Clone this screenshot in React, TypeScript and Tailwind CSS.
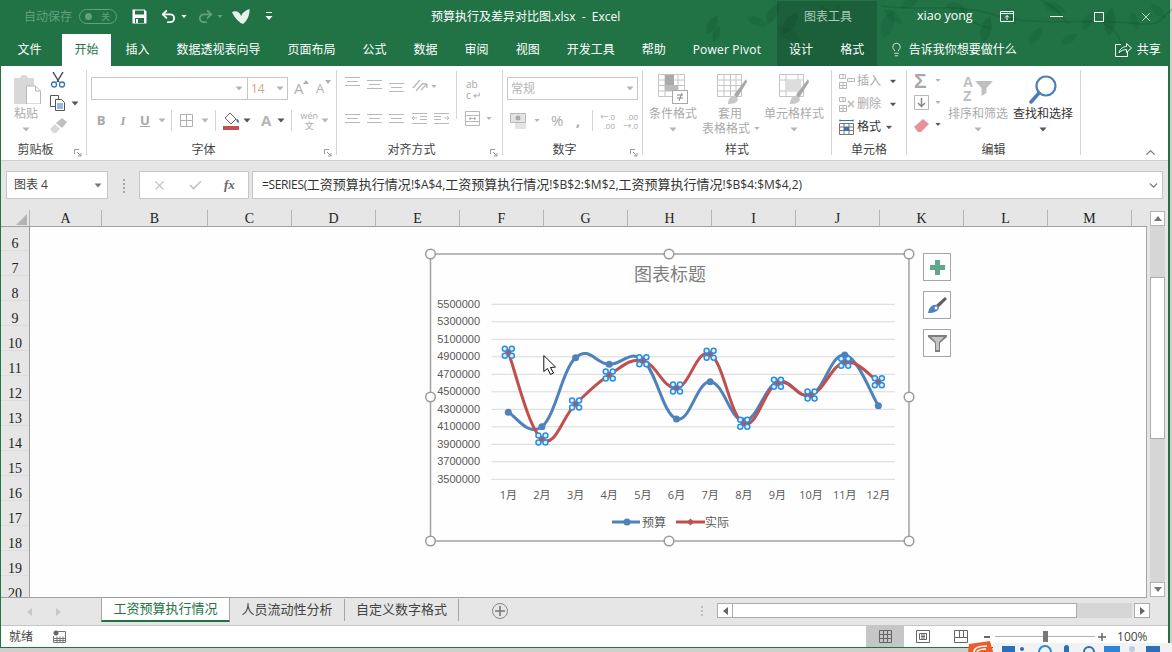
import React from "react";
import { Lightbulb, X, Check, ChevronDown, ChevronUp, Undo2, Redo2 } from "lucide-react";

const XS = Array.from({ length: 12 }, (_, i) => 508.3 + i * 33.64);
const BLUE = [412.3, 426.7, 357.7, 364.3, 360, 419, 381.7, 421, 382, 395, 355, 405.7];
const RED = [352.3, 439, 404, 375, 360.7, 388, 354.3, 423.3, 383.3, 395, 362.3, 381.7];
const YTICKS = ["5500000", "5300000", "5100000", "4900000", "4700000", "4500000", "4300000", "4100000", "3900000", "3700000", "3500000"];

function smooth(ys: number[]) {
  const p = ys.map((y, i) => [XS[i], y]);
  let d = `M${p[0][0]} ${p[0][1]}`;
  for (let i = 0; i < p.length - 1; i++) {
    const a = p[Math.max(0, i - 1)], b = p[i], c = p[i + 1], e = p[Math.min(p.length - 1, i + 2)];
    const t = 1 / 5;
    d += ` C${b[0] + (c[0] - a[0]) * t} ${b[1] + (c[1] - a[1]) * t} ${c[0] - (e[0] - b[0]) * t} ${c[1] - (e[1] - b[1]) * t} ${c[0]} ${c[1]}`;
  }
  return d;
}

function Caret({ c = "#b5b5b5", className = "" }: { c?: string; className?: string }) {
  return (
    <svg width="8" height="5" viewBox="0 0 8 5" className={`shrink-0 ${className}`}>
      <path d="M0.5 0.5h7L4 4.5z" fill={c} />
    </svg>
  );
}

function Sep() {
  return <span className="block w-px h-[21px] bg-[#d4d4d4] shrink-0" />;
}

function Launcher() {
  return (
    <svg width="8" height="8" viewBox="0 0 8 8" className="absolute right-[4px] -bottom-[2px]">
      <path d="M0.5 5V.5H5M3 3l4 4M7 4v3H4" fill="none" stroke="#9a9a9a" />
    </svg>
  );
}

function Label({ children, off }: { children: React.ReactNode; off?: boolean }) {
  return <div className={`h-[16px] leading-[16px] text-center text-[12px] text-[#444444] shrink-0 -mb-[3px] ${off ? "pr-[16px]" : ""}`}>{children}</div>;
}

function Leaf({ x, y, r, s = 1, o = 0.2 }: { x: number; y: number; r: number; s?: number; o?: number }) {
  return (
    <path
      d="M0 0C6 -7 16 -7 24 0C16 6 6 6 0 0Z"
      transform={`translate(${x} ${y}) rotate(${r}) scale(${s})`}
      fill="#0f4a2a"
      opacity={o}
    />
  );
}

function TitleLeaves() {
  return (
    <svg width="1172" height="66" viewBox="0 0 1172 66" className="absolute left-0 top-0 pointer-events-none">
      <path d="M880 6C930 12 950 2 990 14S1060 20 1110 22S1150 30 1172 8" fill="none" stroke="#0f4a2a" strokeOpacity=".28" strokeWidth="1.5" />
      <path d="M1040 0C1056 8 1060 16 1068 24M1100 22C1112 28 1118 34 1120 44M960 8C965 18 975 26 990 28" fill="none" stroke="#0f4a2a" strokeOpacity=".25" strokeWidth="1.5" />
      <Leaf x={884} y={10} r={40} s={0.9} />
      <Leaf x={882} y={38} r={-70} s={1.2} />
      <Leaf x={900} y={8} r={-30} s={0.9} />
      <Leaf x={945} y={4} r={25} s={1.1} />
      <Leaf x={982} y={42} r={-75} s={1.1} o={0.25} />
      <Leaf x={1005} y={8} r={60} s={0.8} />
      <Leaf x={1028} y={44} r={-50} s={0.9} />
      <Leaf x={1042} y={4} r={20} s={1} />
      <Leaf x={1082} y={30} r={-60} s={0.9} />
      <Leaf x={1108} y={36} r={-85} s={1.2} o={0.24} />
      <Leaf x={1130} y={12} r={70} s={0.8} />
      <Leaf x={1118} y={58} r={-70} s={0.8} />
      <Leaf x={1150} y={4} r={45} s={0.8} />
      <Leaf x={820} y={6} r={60} s={0.8} o={0.25} />
      <Leaf x={838} y={4} r={100} s={0.7} o={0.25} />
      <Leaf x={782} y={34} r={-55} s={1.1} o={0.3} />
      <Leaf x={776} y={28} r={30} s={1.1} o={0.25} />
      <Leaf x={850} y={42} r={40} s={0.8} o={0.25} />
      <Leaf x={706} y={34} r={-60} s={0.9} o={0.24} />
      <Leaf x={718} y={26} r={110} s={0.7} o={0.24} />
      <Leaf x={766} y={24} r={-60} s={1} o={0.22} />
      <Leaf x={746} y={18} r={20} s={0.9} o={0.2} />
      <Leaf x={1060} y={44} r={-30} s={0.8} o={0.18} />
    </svg>
  );
}

function TitleBar() {
  return (
    <div className="h-[33px] flex items-center text-white relative">
      <span className="ml-[23px] text-[12px] text-[#62a07e]">自动保存</span>
      <span className="ml-[7px] w-[38px] h-[15px] rounded-full border border-[#62a07e] flex items-center justify-between pl-[5px] pr-[6px] text-[9px] text-[#62a07e]">
        <span className="w-[7px] h-[7px] rounded-full bg-[#62a07e]" />
        <span>关</span>
      </span>
      <svg width="15" height="15" viewBox="0 0 15 15" className="ml-[15px]">
        <path d="M0.5 0.5h12l2 2v12h-14z" fill="#fff" />
        <rect x="3" y="1.5" width="9" height="4" fill="#217346" />
        <rect x="3" y="9" width="9" height="5" fill="#217346" />
        <rect x="4" y="10" width="2" height="4" fill="#fff" />
      </svg>
      <Undo2 size={17} strokeWidth={2.6} className="ml-[13px]" />
      <Caret c="#ffffff" className="ml-[3px] scale-75" />
      <Redo2 size={17} strokeWidth={2.6} className="ml-[9px] text-[#62a07e]" />
      <Caret c="#62a07e" className="ml-[2px] scale-75" />
      <svg width="18" height="15" viewBox="0 0 18 15" className="ml-[8px]">
        <path d="M0 3C4 1 8 3 9 7C11 3 14 1 17.500 0C18 6 15 12 11 15C8 14 3 10 0 3Z" fill="#e8f0ea" />
      </svg>
      <svg width="8" height="9" viewBox="0 0 8 9" className="ml-[15px]">
        <path d="M1 .5h6" stroke="#fff" />
        <path d="M0.5 4h7L4 8z" fill="#fff" />
      </svg>
      <span className="ml-[158px] text-[12px] leading-none whitespace-pre w-[373px]">预算执行及差异对比图.xlsx  -  Excel</span>
      <span className="text-[12px] text-[#a6cbb6] w-[113px]">图表工具</span>
      <span className="text-[12.5px] w-[83px]">xiao yong</span>
      <svg width="14" height="11" viewBox="0 0 14 11">
        <path d="M.5.5h13v10H.5zM.5 2.500h13M7 9V4.500M5 6.500l2-2 2 2" fill="none" stroke="#fff" />
      </svg>
      <span className="ml-[36px] w-[13px] h-px bg-white" />
      <span className="ml-[31px] w-[10px] h-[10px] border border-white" />
      <X size={14} strokeWidth={1.2} className="ml-[35px]" />
    </div>
  );
}

function Tab({ children, active, cls = "" }: { children: React.ReactNode; active?: boolean; cls?: string }) {
  return (
    <span className={`h-[32px] mt-[1px] flex items-center px-[12.5px] text-[12px] whitespace-nowrap ${active ? "bg-white text-[#217346]" : "text-white"} ${cls}`}>
      {children}
    </span>
  );
}

function TabBar() {
  return (
    <div className="h-[33px] flex relative pl-[4px] gap-[2px]">
      <Tab>文件</Tab>
      <Tab active cls="ml-[6px]">开始</Tab>
      <Tab>插入</Tab>
      <Tab>数据透视表向导</Tab>
      <Tab>页面布局</Tab>
      <Tab>公式</Tab>
      <Tab>数据</Tab>
      <Tab>审阅</Tab>
      <Tab>视图</Tab>
      <Tab>开发工具</Tab>
      <Tab>帮助</Tab>
      <Tab><span className="tracking-[0.2px]">Power Pivot</span></Tab>
      <Tab cls="ml-[1px]">设计</Tab>
      <Tab>格式</Tab>
      <span className="ml-[10px] flex items-center text-white text-[12px] whitespace-nowrap">
        <Lightbulb size={15} strokeWidth={1.2} />
        <span className="ml-[5px]">告诉我你想要做什么</span>
      </span>
      <span className="ml-[96px] flex items-center text-white text-[12px]">
        <svg width="17" height="15" viewBox="0 0 17 15">
          <path d="M6 2.500H.5v12h12V10M4 11C5 6 9 4.500 11.500 4.500V1.500L16.500 6l-5 4.500V7.500C9 7.500 6 8.500 4 11Z" fill="none" stroke="#fff" />
        </svg>
        <span className="ml-[5px]">共享</span>
      </span>
    </div>
  );
}

function BigBtn({ icon, lines, dark, iconCls = "", firstCls = "" }: { icon: React.ReactNode; lines: string[]; dark?: boolean; iconCls?: string; firstCls?: string }) {
  return (
    <div className="flex flex-col items-center pt-[4px]">
      <div className={`h-[30px] flex items-center justify-center ${iconCls}`}>{icon}</div>
      <div className={`text-[12px] leading-[15px] mt-[2px] whitespace-nowrap text-center ${dark ? "text-[#333333]" : "text-[#aaaaaa]"}`}>
        {lines.map((l, i) => (
          <div key={l} className={i === 0 ? firstCls : ""}>{l}</div>
        ))}
      </div>
    </div>
  );
}

const G = "#b8b8b8";

function Lines({ cls = "" }: { cls?: string }) {
  return (
    <svg width="15" height="10" viewBox="0 0 15 10" className={cls}>
      <path d="M0 .5h15M2 4.500h11M0 8.500h15" stroke={G} />
    </svg>
  );
}

function Indent({ cls = "" }: { cls?: string }) {
  return (
    <svg width="15" height="11" viewBox="0 0 15 11" className={cls}>
      <path d="M0 .5h15M8 3.500h7M8 6.500h7M0 10.500h15M5 5H0M2 3L0 5l2 2" fill="none" stroke={G} />
    </svg>
  );
}

function CellIcon({ x }: { x?: boolean }) {
  return (
    <svg width="16" height="16" viewBox="0 0 16 16">
      <path d="M.5 1.500h6v4h-6zM.5 9.500h7v6h-7zM.5 12.500h7M4 9.500v6M4 1.500v4" fill="none" stroke={G} />
      {x ? <path d="M9 5l6 6M15 5l-6 6" stroke={G} strokeWidth="1.500" /> : <path d="M8.500 5.500h7v3h-7z" fill="none" stroke={G} />}
    </svg>
  );
}

function Ribbon() {
  return (
    <div className="h-[94px] bg-white flex pt-[4px] pb-[5px] text-[#aaaaaa] relative">
      {/* clipboard */}
      <div className="w-[86px] flex flex-col border-r border-[#d4d4d4] relative">
        <div className="flex-1 flex">
          <div className="ml-[10px] w-[30px] flex flex-col items-center pt-[4px]">
            <svg width="30" height="30" viewBox="0 0 30 30">
              <path d="M3 4h6l2-3h4l2 3h6v26H3z" fill="#d8d8d8" />
              <path d="M15.500 12h9l5 5v13h-14z" fill="#fff" stroke="#b8b8b8" />
              <path d="M24.500 12v5h5" fill="none" stroke="#b8b8b8" />
            </svg>
            <span className="text-[12px] leading-[15px] mt-[2px]">粘贴</span>
            <Caret className="mt-[6px]" />
          </div>
          <div className="ml-[9px] flex flex-col pt-[2px] gap-[7px]">
            <svg width="16" height="16" viewBox="0 0 16 16">
              <path d="M3 0l6 10M13 0L7 10" stroke="#444" strokeWidth="1.400" />
              <circle cx="4" cy="12.500" r="2.500" fill="none" stroke="#2f75b5" strokeWidth="1.300" />
              <circle cx="12" cy="12.500" r="2.500" fill="none" stroke="#2f75b5" strokeWidth="1.300" />
            </svg>
            <div className="flex items-center">
              <svg width="16" height="16" viewBox="0 0 16 16">
                <path d="M.5.5h8v11h-8z" fill="#fff" stroke="#555" />
                <path d="M5.500 4.500h6l3 3v8h-9z" fill="#fff" stroke="#555" />
                <path d="M7 9h6M7 11h6M7 13h6" stroke="#2f75b5" />
              </svg>
              <Caret c="#555" className="ml-[5px]" />
            </div>
            <svg width="17" height="16" viewBox="0 0 17 16">
              <path d="M0 11l5-5 5 5-4 4H3z" fill="#d8d8d8" />
              <path d="M6 5l6-5 5 4-5 6z" fill="#c0c0c0" />
            </svg>
          </div>
        </div>
        <Label off>剪贴板</Label>
        <Launcher />
      </div>

      {/* font */}
      <div className="w-[250px] flex flex-col border-r border-[#d4d4d4] relative">
        <div className="flex-1">
          <div className="flex items-center pl-[4px] pt-[7px]">
            <div className="w-[157px] h-[23px] border border-[#c6c6c6] flex items-center justify-end pr-[4px]"><Caret /></div>
            <div className="w-[41px] h-[23px] border border-[#c6c6c6] flex items-center justify-between px-[3px] -ml-px text-[12px] text-[#c9a988]">14<Caret /></div>
            <span className="ml-[6px] text-[15px] leading-none text-[#b0b0b0] relative w-[15px]">A<span className="absolute right-0 -top-[1px]"><svg width="6" height="4" viewBox="0 0 6 4"><path d="M0 4h6L3 0z" fill="#b0b0b0" /></svg></span></span>
            <span className="ml-[7px] text-[13px] leading-none text-[#b0b0b0] relative w-[15px]">A<span className="absolute right-0 -top-[2px]"><svg width="6" height="4" viewBox="0 0 6 4"><path d="M0 0h6L3 4z" fill="#b0b0b0" /></svg></span></span>
          </div>
          <div className="flex items-center h-[21px] mt-[10px] pl-[3px] text-[13px] text-[#a8a8a8]">
            <span className="w-[22px] text-center font-bold">B</span>
            <span className="w-[22px] text-center italic font-['Liberation_Serif',serif] font-bold">I</span>
            <span className="w-[22px] text-center underline font-bold">U</span>
            <Caret className="ml-[2px]" />
            <span className="w-[5px]" />
            <Sep />
            <svg width="14" height="14" viewBox="0 0 14 14" className="ml-[8px]">
              <path d="M.5.5h12v12H.5zM6.500 .5v12M.5 6.500h12" fill="none" stroke="#b0b0b0" />
            </svg>
            <Caret className="ml-[7px]" />
            <span className="w-[6px]" />
            <Sep />
            <svg width="17" height="18" viewBox="0 0 17 18" className="ml-[7px]">
              <path d="M7 1l6 6-5 5-6-6z" fill="#fff" stroke="#666" />
              <path d="M13 7c2 0 3 1 3 3 0 1-1 1-2 0z" fill="#2f75b5" />
              <rect x="0" y="14" width="16" height="4" fill="#c44f4f" />
            </svg>
            <Caret c="#555" className="ml-[3px]" />
            <span className="ml-[10px] text-[15px] font-bold text-[#b5b5b5] leading-none">A</span>
            <Caret c="#555" className="ml-[6px]" />
            <span className="w-[6px]" />
            <Sep />
            <span className="ml-[8px] w-[18px] flex flex-col items-center leading-[10px] text-[9px] text-[#aaaaaa]"><span>wén</span><span className="text-[9px]">文</span></span>
            <Caret className="ml-[3px]" />
          </div>
        </div>
        <Label off>字体</Label>
        <Launcher />
      </div>

      {/* alignment */}
      <div className="w-[166px] flex flex-col border-r border-[#d4d4d4] relative">
        <div className="flex-1 flex">
          <div className="w-[119px] flex flex-col pl-[8px]">
            <div className="flex items-center h-[22px] mt-[5px]">
              <Lines cls="-mt-[8px]" />
              <Lines cls="ml-[7px] -mt-[2px]" />
              <Lines cls="ml-[7px] mt-[4px]" />
              <svg width="16" height="16" viewBox="0 0 16 16" className="ml-[8px]">
                <path d="M1 10L8 2M4 13l7-8M9 12l6-6M15 6v4M15 6h-4" fill="none" stroke={G} strokeWidth="1.300" />
              </svg>
              <Caret className="ml-[2px] scale-75" />
            </div>
            <div className="flex items-center h-[21px] mt-[11px]">
              <Lines />
              <Lines cls="ml-[7px]" />
              <Lines cls="ml-[7px]" />
              <Indent cls="ml-[8px]" />
              <Indent cls="ml-[7px] -scale-x-100" />
            </div>
          </div>
          <div className="flex flex-col">
            <span className="block w-px h-[48px] mt-[1px] bg-[#d4d4d4]" />
          </div>
          <div className="ml-[8px] flex flex-col">
            <div className="text-[10px] leading-[11px] mt-[9px] h-[25px] pl-[1px] text-[#a8a8a8]">ab<br />c ↵</div>
            <div className="flex items-center mt-[7px]">
              <svg width="15" height="15" viewBox="0 0 15 15">
                <path d="M.5.500h14v14H.5zM.5 4.500h14M.5 10.500h14M4 7.500h7M4 7.500l2-1.500M4 7.500l2 1.500M11 7.500l-2-1.500M11 7.500l-2 1.500" fill="none" stroke={G} />
              </svg>
              <Caret className="ml-[5px] scale-75" />
            </div>
          </div>
        </div>
        <Label off>对齐方式</Label>
        <Launcher />
      </div>

      {/* number */}
      <div className="w-[140px] flex flex-col border-r border-[#d4d4d4] relative">
        <div className="flex-1 pl-[4px]">
          <div className="mt-[7px] w-[131px] h-[23px] border border-[#c6c6c6] flex items-center justify-between px-[3px] text-[12px] text-[#b4b4b4]">常规<Caret /></div>
          <div className="flex items-center h-[21px] mt-[10px] pl-[3px]">
            <svg width="17" height="17" viewBox="0 0 17 17">
              <path d="M.5 1.500h15v9H.5z" fill="#e4e4e4" stroke={G} />
              <circle cx="8" cy="6" r="2.500" fill="#aaa" />
              <path d="M5 12h11M5 14h11M5 16h11" stroke="#c8c8c8" />
            </svg>
            <Caret className="ml-[6px] scale-75" />
            <span className="ml-[10px] text-[15px] text-[#aaaaaa] w-[16px] leading-none">%</span>
            <span className="ml-[9px] text-[14px] font-bold text-[#aaaaaa] w-[6px] leading-none">,</span>
            <span className="w-[10px]" />
            <Sep />
            <span className="ml-[7px] w-[15px] text-right text-[8px] leading-[9px] text-[#a8a8a8]">←.0<br />.00</span>
            <span className="ml-[8px] w-[15px] text-right text-[8px] leading-[9px] text-[#a8a8a8]">.00<br />→.0</span>
          </div>
        </div>
        <Label off>数字</Label>
        <Launcher />
      </div>

      {/* styles */}
      <div className="w-[189px] flex flex-col border-r border-[#d4d4d4]">
        <div className="flex-1 flex pl-[6px]">
          <div className="w-[48px]">
            <BigBtn
              icon={
                <svg width="30" height="30" viewBox="0 0 30 30">
                  <path d="M.5.500h26v22H.5zM.5 6h26M.5 11.500h26M.5 17h26M7 .5v22M20 .5v22" fill="none" stroke="#c4c4c4" />
                  <rect x="7" y="1" width="9" height="10" fill="#aaaaaa" />
                  <rect x="7" y="11" width="13" height="6" fill="#bbbbbb" />
                  <rect x="14.500" y="16.500" width="15" height="13" fill="#fff" stroke="#aaa" />
                  <path d="M19 21h6M19 24h6M24 19l-3 8" stroke="#888" fill="none" />
                </svg>
              }
              lines={["条件格式"]}
            />
            <div className="flex justify-center mt-[6px]"><Caret /></div>
          </div>
          <div className="w-[58px]">
            <BigBtn
              iconCls="ml-[12px]"
              firstCls="pl-[8px]"
              icon={
                <svg width="30" height="30" viewBox="0 0 30 30">
                  <path d="M.5.500h24v22H.5zM.5 6h24M.5 11.500h24M.5 17h24M7 .5v22M13.500 .5v22M19 .5v22" fill="none" stroke="#c4c4c4" />
                  <path d="M29 5L17 21l3 3L30 8z" fill="#a8a8a8" />
                  <path d="M11 30c0-6 4-9 7-8l3 3c0 4-5 5-10 5z" fill="#c8c8c8" />
                </svg>
              }
              lines={["套用", "表格格式"]}
            />
          </div>
          <span className="-ml-[2px] mt-[56px]"><Caret className="scale-75" /></span>
          <div className="ml-[3px] w-[60px]">
            <BigBtn
              icon={
                <svg width="30" height="30" viewBox="0 0 30 30">
                  <path d="M.5.500h24v22H.5zM.5 6h24M.5 17h24M7 .5v22M19 .5v22" fill="none" stroke="#c4c4c4" />
                  <rect x="7" y="6" width="15" height="11" fill="#dddddd" />
                  <path d="M29 5L17 21l3 3L30 8z" fill="#a8a8a8" />
                  <path d="M11 30c0-6 4-9 7-8l3 3c0 4-5 5-10 5z" fill="#c8c8c8" />
                </svg>
              }
              lines={["单元格样式"]}
            />
            <div className="flex justify-center mt-[6px]"><Caret /></div>
          </div>
        </div>
        <Label>样式</Label>
      </div>

      {/* cells */}
      <div className="w-[75px] flex flex-col border-r border-[#d4d4d4]">
        <div className="flex-1 flex flex-col pl-[7px] pt-[2px] text-[12px] gap-[5px]">
          <div className="h-[18px] flex items-center">
            <CellIcon />
            <span className="ml-[2px] w-[32px]">插入</span>
            <Caret c="#555" className="scale-90" />
          </div>
          <div className="h-[18px] flex items-center">
            <CellIcon x />
            <span className="ml-[2px] w-[32px]">删除</span>
            <Caret c="#555" className="scale-90" />
          </div>
          <div className="h-[18px] flex items-center text-[#333333]">
            <svg width="16" height="16" viewBox="0 0 16 16">
              <path d="M.5 1.500h14M1 .5v2M14 .5v2" stroke="#2f75b5" fill="none" />
              <path d="M.5 4.500h14v11H.5zM.5 8h14M.5 11.500h14M5 4.500v11M10 4.500v11" fill="none" stroke="#777" />
              <rect x="5" y="8" width="5" height="4" fill="#2f75b5" />
            </svg>
            <span className="ml-[2px] w-[28px]">格式</span>
            <Caret c="#555" className="scale-90" />
          </div>
        </div>
        <Label>单元格</Label>
      </div>

      {/* editing */}
      <div className="w-[174px] flex flex-col border-r border-[#d4d4d4]">
        <div className="flex-1 flex pl-[7px]">
          <div className="flex flex-col pt-[3px] gap-[7px] w-[34px]">
            <div className="h-[15px] flex items-center">
              <span className="text-[21px] leading-none text-[#a8a8a8] w-[16px] font-bold font-['Liberation_Sans',sans-serif]">Σ</span>
              <Caret className="ml-[4px] scale-75" />
            </div>
            <div className="h-[15px] flex items-center">
              <svg width="15" height="15" viewBox="0 0 15 15">
                <path d="M.5.500h14v14H.5z" fill="none" stroke={G} />
                <path d="M7.500 3v8M4 8l3.500 3.500L11 8" fill="none" stroke="#888" strokeWidth="1.500" />
              </svg>
              <Caret className="ml-[5px] scale-75" />
            </div>
            <div className="h-[15px] flex items-center">
              <svg width="15" height="14" viewBox="0 0 15 14">
                <path d="M0 9l9-8 6 5-8 8H4z" fill="#e8909c" />
              </svg>
              <Caret c="#555" className="ml-[5px] scale-75" />
            </div>
          </div>
          <div className="w-[60px]">
            <BigBtn
              icon={
                <span className="flex items-center w-[30px]">
                  <span className="flex flex-col w-[12px] text-[14px] leading-[14px] font-bold text-[#bdbdbd] font-['Liberation_Sans',sans-serif]">
                    <span>A</span>
                    <span>Z</span>
                  </span>
                  <svg width="18" height="16" viewBox="0 0 18 16">
                    <path d="M0 0h18l-6.500 7v5l-5 3V7z" fill="#c0c0c0" />
                  </svg>
                </span>
              }
              lines={["排序和筛选"]}
            />
            <div className="flex justify-center mt-[6px]"><Caret /></div>
          </div>
          <div className="w-[60px] ml-[5px]">
            <BigBtn
              dark
              icon={
                <svg width="28" height="29" viewBox="0 0 28 29">
                  <circle cx="17" cy="11" r="9.500" fill="none" stroke="#4a7ebb" strokeWidth="2.200" />
                  <path d="M10 18L2 27" stroke="#4a7ebb" strokeWidth="3.500" strokeLinecap="round" />
                </svg>
              }
              lines={["查找和选择"]}
            />
            <div className="flex justify-center mt-[6px]"><Caret c="#555" /></div>
          </div>
        </div>
        <Label>编辑</Label>
      </div>
      <ChevronUp size={15} strokeWidth={2} className="absolute right-[10px] bottom-[0px] text-[#777777]" />
    </div>
  );
}

function FormulaBar() {
  const L = "text-[12px]";
  return (
    <div className="h-[28px] mt-[10px] flex pl-[5px] pr-[5px]">
      <div className="w-[102px] bg-white border border-[#c6c6c6] flex items-center justify-between pl-[7px] pr-[5px] text-[12px] text-[#444444]">
        图表 4
        <Caret c="#777777" />
      </div>
      <div className="w-[31px] flex flex-col items-center justify-center gap-[2px] pt-[1px]">
        <span className="w-[2px] h-[2px] bg-[#a6a6a6]" />
        <span className="w-[2px] h-[2px] bg-[#a6a6a6]" />
        <span className="w-[2px] h-[2px] bg-[#a6a6a6]" />
        <span className="w-[2px] h-[2px] bg-[#a6a6a6]" />
      </div>
      <div className="w-[110px] bg-white border border-[#c6c6c6] flex items-center pl-[12px]">
        <X size={15} strokeWidth={1.800} className="text-[#c4c4c4]" />
        <Check size={15} strokeWidth={2.800} className="ml-[21px] text-[#c4c4c4]" />
        <span className="ml-[21px] text-[13px] font-bold italic text-[#666666] font-['Liberation_Serif',serif]">fx</span>
      </div>
      <div className="ml-[3px] flex-1 bg-white border border-[#c6c6c6] flex items-center justify-between pl-[9px] pr-[2px] text-[13px] text-[#333333] whitespace-nowrap">
        <span>
          <span className={`${L} tracking-[-0.35px]`}>=SERIES(</span>工资预算执行情况<span className={L}>!$A$4,</span>工资预算执行情况<span className={L}>!$B$2:$M$2,</span>工资预算执行情况<span className={L}>!$B$4:$M$4,2)</span>
        </span>
        <ChevronDown size={13} strokeWidth={2.500} className="text-[#777777]" />
      </div>
    </div>
  );
}

const COLS: [string, string][] = [
  ["A", "w-[72px]"],
  ["B", "w-[106px]"],
  ["C", "w-[84px]"],
  ["D", "w-[84px]"],
  ["E", "w-[84px]"],
  ["F", "w-[84px]"],
  ["G", "w-[84px]"],
  ["H", "w-[84px]"],
  ["I", "w-[84px]"],
  ["J", "w-[84px]"],
  ["K", "w-[84px]"],
  ["L", "w-[84px]"],
  ["M", "w-[84px]"],
];

function ColHeader() {
  return (
    <div className="h-[17px] flex border-b border-[#9f9f9f] font-['Liberation_Serif',serif] text-[14px] leading-[18px] text-[#222222]">
      <div className="w-[29px] border-r border-[#b4b4b4] flex items-end justify-end pr-[2px] pb-[1px]">
        <svg width="11" height="11" viewBox="0 0 11 11"><path d="M11 0v11H0z" fill="#b4b4b4" /></svg>
      </div>
      {COLS.map(([c, w]) => (
        <div key={c} className={`${w} border-r border-[#b4b4b4] text-center`}>{c}</div>
      ))}
    </div>
  );
}

function RowHeader() {
  const rows = [6, 7, 8, 9, 10, 11, 12, 13, 14, 15, 16, 17, 18, 19, 20];
  return (
    <div className="w-[29px] border-r border-[#9f9f9f] overflow-hidden shrink-0 font-['Liberation_Serif',serif] text-[14px] leading-[16px] text-[#222222]">
      {rows.map((r) => (
        <div key={r} className={`${r === 6 ? "h-[24px]" : "h-[25px]"} border-b border-[#dcdcdc] flex items-end justify-center`}>
          <span className="-mb-[2px]">{r}</span>
        </div>
      ))}
    </div>
  );
}

function SelMarker({ x, y }: { x: number; y: number }) {
  return (
    <g>
      <path d={`M${x} ${y - 3.500}L${x + 3.500} ${y}L${x} ${y + 3.500}L${x - 3.500} ${y}Z`} fill="#c0504d" />
      {[[-3.500, -3.500], [3.500, -3.500], [-3.500, 3.500], [3.500, 3.500]].map(([dx, dy], i) => (
        <circle key={i} cx={x + dx} cy={y + dy} r="2.500" fill="#e4f2fc" stroke="#2b8ee0" strokeWidth="1.500" />
      ))}
    </g>
  );
}

function Chart() {
  const handles = [
    [430.5, 254], [669, 254], [909, 254], [430.5, 397], [909, 397], [430.5, 541], [669, 541], [909, 541],
  ];
  return (
    <svg width="500" height="304" viewBox="420 246 500 304" className="absolute left-[390px] top-[19px]">
      <rect x="430.500" y="254" width="478.500" height="287" fill="#fefefe" stroke="#a2a2a2" strokeWidth="1.500" />
      <text x="670" y="281" textAnchor="middle" fontSize="18" fill="#7f7f7f">图表标题</text>
      {YTICKS.map((t, i) => (
        <g key={t}>
          <line x1="491.500" x2="895" y1={304.300 + i * 17.500} y2={304.300 + i * 17.500} stroke="#d9d9d9" strokeWidth="1" />
          <text x="480" y={307.500 + i * 17.500} textAnchor="end" fontSize="11" fill="#595959" fontFamily="'Liberation Sans',sans-serif">{t}</text>
        </g>
      ))}
      {XS.map((x, i) => (
        <text key={i} x={x} y={499} textAnchor="middle" fontSize="11" fill="#595959">{i + 1}月</text>
      ))}
      <path d={smooth(BLUE)} fill="none" stroke="#4f81bd" strokeWidth="3" strokeLinecap="round" />
      {XS.map((x, i) => (
        <circle key={i} cx={x} cy={BLUE[i]} r="3.500" fill="#4f81bd" />
      ))}
      <path d={smooth(RED)} fill="none" stroke="#c0504d" strokeWidth="3" strokeLinecap="round" />
      {XS.map((x, i) => (
        <SelMarker key={i} x={x} y={RED[i]} />
      ))}
      <line x1="612" x2="640" y1="522" y2="522" stroke="#4f81bd" strokeWidth="3" />
      <circle cx="627" cy="522" r="3.500" fill="#4f81bd" />
      <text x="642" y="526.500" fontSize="12" fill="#595959">预算</text>
      <line x1="676" x2="705" y1="522" y2="522" stroke="#c0504d" strokeWidth="3" />
      <path d="M690.500 518.500l3.500 3.500-3.500 3.500-3.500-3.500z" fill="#c0504d" />
      <text x="705" y="526.500" fontSize="12" fill="#595959">实际</text>
      {handles.map(([x, y], i) => (
        <circle key={i} cx={x} cy={y} r="4.800" fill="#fefefe" stroke="#9a9a9a" strokeWidth="1.500" />
      ))}
      <path d="M543.800 355.500V371.500L547.500 368.500L550.500 374.500L553.500 373L550.500 367.500L555.500 367Z" fill="#fff" stroke="#111" strokeWidth="1" />
    </svg>
  );
}

function ChartTools() {
  const box = "w-[28px] h-[28px] bg-[#fefefe] border border-[#a6a6a6] flex items-center justify-center";
  return (
    <div className="absolute left-[893px] top-[26px] flex flex-col gap-[10px]">
      <div className={box}>
        <svg width="15" height="15" viewBox="0 0 15 15"><path d="M5 0h5v5h5v5h-5v5H5v-5H0V5h5z" fill="#62a78c" /></svg>
      </div>
      <div className={box}>
        <svg width="19" height="17" viewBox="0 0 19 17">
          <path d="M17 0l2 2-8 8-3-2z" fill="#5f5f5f" />
          <path d="M0 16c1-6 5-9 8-8l3 2c0 4-5 6-11 6z" fill="#4f81bd" />
          <circle cx="8" cy="11" r="2" fill="#fff" stroke="#4f81bd" />
        </svg>
      </div>
      <div className={box}>
        <svg width="19" height="17" viewBox="0 0 19 17">
          <path d="M0 0h19v2l-7 6v9H7V8L0 2z" fill="#7f7f7f" />
          <path d="M3 2h13l-5 5v8H8V7z" fill="#c4c4c4" />
        </svg>
      </div>
    </div>
  );
}

function VScroll() {
  const btn = "h-[15px] bg-white border border-[#b4b4b4] flex items-center justify-center shrink-0";
  return (
    <div className="w-[15px] ml-[3px] mr-[3px] flex flex-col pt-[1px] h-[387px] shrink-0">
      <div className={btn}>
        <svg width="8" height="5" viewBox="0 0 8 5"><path d="M0 5h8L4 0z" fill="#777" /></svg>
      </div>
      <div className="h-[51px] bg-[#d6d6d6] shrink-0" />
      <div className="h-[162px] bg-white border border-[#ababab] shrink-0" />
      <div className="flex-1 bg-[#d6d6d6]" />
      <div className={btn}>
        <svg width="8" height="5" viewBox="0 0 8 5"><path d="M0 0h8L4 5z" fill="#777" /></svg>
      </div>
    </div>
  );
}

function Sheet() {
  return (
    <div className="flex">
      <div className="w-[1146px]">
        <ColHeader />
        <div className="h-[371px] flex border-b border-[#9f9f9f]">
          <RowHeader />
          <div className="flex-1 bg-[#fefefe] relative border-r border-[#a6a6a6]">
            <Chart />
            <ChartTools />
          </div>
        </div>
      </div>
      <VScroll />
    </div>
  );
}

function SheetTabs() {
  const hbtn = "w-[16px] h-[15px] bg-white border border-[#ababab] flex items-center justify-center shrink-0";
  return (
    <div className="h-[27px] flex text-[13px] text-[#444444] whitespace-nowrap">
      <div className="w-[100px] flex items-center pl-[26px]">
        <svg width="5" height="8" viewBox="0 0 5 8"><path d="M5 0v8L0 4z" fill="#c6c6c6" /></svg>
        <svg width="5" height="8" viewBox="0 0 5 8" className="ml-[24px]"><path d="M0 0v8l5-4z" fill="#c6c6c6" /></svg>
      </div>
      <div className="w-[129px] h-[24px] bg-white border-b-2 border-[#217346] border-l border-r border-l-[#a6a6a6] border-r-[#a6a6a6] flex items-center justify-center text-[#217346]">工资预算执行情况</div>
      <div className="w-[115px] h-[22px] flex items-center justify-center border-r border-[#a6a6a6] my-[1px]">人员流动性分析</div>
      <div className="w-[114px] h-[22px] flex items-center justify-center border-r border-[#a6a6a6] my-[1px]">自定义数字格式</div>
      <div className="ml-[33px] flex items-center pb-[2px]">
        <span className="w-[16px] h-[16px] rounded-full border border-[#888888] flex items-center justify-center">
          <svg width="10" height="10" viewBox="0 0 10 10"><path d="M5 0v10M0 5h10" stroke="#777" strokeWidth="1.600" /></svg>
        </span>
      </div>
      <div className="ml-[193px] flex flex-col justify-center gap-[2px] pb-[2px]">
        <span className="w-[2px] h-[2px] bg-[#c0c0c0]" />
        <span className="w-[2px] h-[2px] bg-[#c0c0c0]" />
        <span className="w-[2px] h-[2px] bg-[#c0c0c0]" />
      </div>
      <div className="ml-[14px] flex items-center h-[25px]">
        <div className={hbtn}><svg width="5" height="8" viewBox="0 0 5 8"><path d="M5 0v8L0 4z" fill="#666" /></svg></div>
        <div className="w-[345px] h-[15px] bg-white border border-[#ababab] -ml-px" />
        <div className="w-[55px] h-[15px] bg-[#d6d6d6]" />
        <div className={`${hbtn} ml-[2px]`}><svg width="5" height="8" viewBox="0 0 5 8"><path d="M0 0v8l5-4z" fill="#666" /></svg></div>
      </div>
    </div>
  );
}

function StatusBar() {
  return (
    <div className="h-[22px] bg-white border-t border-[#c6c6c6] flex items-center text-[12px] text-[#444444]">
      <span className="ml-[8px]">就绪</span>
      <svg width="13" height="13" viewBox="0 0 13 13" className="ml-[20px]">
        <circle cx="3" cy="3" r="2.500" fill="#666" />
        <path d="M5 1.500h7.500v11H.5V6M.5 8.500h12M.5 10.500h12M4 6.500v6M7 6.500v6M10 6.500v6" fill="none" stroke="#777" />
      </svg>
      <div className="ml-[800px] w-[38px] h-[21px] bg-[#c6c6c6] flex items-center justify-center">
        <svg width="13" height="13" viewBox="0 0 13 13"><path d="M.5.500h12v12H.5zM4.500 .5v12M8.500 .5v12M.5 4.500h12M.5 8.500h12" fill="none" stroke="#666" /></svg>
      </div>
      <svg width="14" height="13" viewBox="0 0 14 13" className="ml-[12px]">
        <path d="M.5.500h13v12H.5zM3.500 3.500h7v6h-7zM5 5h4M5 6.500h4M5 8h4" fill="none" stroke="#666" />
      </svg>
      <svg width="14" height="13" viewBox="0 0 14 13" className="ml-[24px]">
        <path d="M.5.500h13v12H.5zM.5 7.500h13M5.500 .5v7M9.500 .5v7" fill="none" stroke="#666" />
      </svg>
      <span className="ml-[16px] w-[6px] h-[2px] bg-[#666666]" />
      <span className="ml-[5px] w-[100px] h-px bg-[#b0b0b0] relative">
        <span className="absolute left-[48px] -top-[5px] w-[5px] h-[11px] bg-[#777777]" />
      </span>
      <svg width="8" height="8" viewBox="0 0 8 8" className="ml-[3px]"><path d="M4 0v8M0 4h8" stroke="#666" strokeWidth="1.500" /></svg>
      <span className="ml-[11px] text-[#444444]">100%</span>
    </div>
  );
}

function Tray() {
  return (
    <div className="absolute left-[968px] top-[641px] w-[204px] h-[11px] overflow-hidden flex">
      <svg width="25" height="11" viewBox="0 0 25 11" className="shrink-0">
        <path d="M1 3L22 0L25 11H0Z" fill="#ee5c2c" />
        <path d="M6 11C6 6 12 5 19 5M9 11C10 8 14 8 18 8" fill="none" stroke="#fff" strokeWidth="1.600" />
      </svg>
      <div className="flex-1 bg-[#f2f2f2] mt-[2px] overflow-hidden">
        <svg width="180" height="9" viewBox="0 0 180 9">
          <rect x="9" y="3" width="13" height="9" fill="#2a6fbb" />
          <circle cx="29" cy="6" r="2" fill="#2a6fbb" />
          <circle cx="52" cy="9" r="6" fill="none" stroke="#2a86d8" strokeWidth="2" />
          <rect x="71" y="2" width="5" height="9" rx="2.500" fill="#2a6fbb" />
          <circle cx="96" cy="9" r="5" fill="none" stroke="#2a6fbb" strokeWidth="2" />
          <rect x="111" y="3" width="16" height="9" fill="#2a86d8" />
          <circle cx="139" cy="6" r="3" fill="#b9cde0" />
          <rect x="153" y="3" width="14" height="9" fill="#2a6fbb" />
        </svg>
      </div>
    </div>
  );
}

export default function App() {
  return (
    <div className="relative w-[1172px] h-[652px] overflow-hidden bg-[#cfcfcf] font-['Open_Sans','Noto_Sans_CJK_SC',sans-serif]">
      <div className="w-[1170px] h-[648px] bg-[#e6e6e6] border-l border-r-2 border-b border-[#217346] flex flex-col">
        <div className="h-[66px] bg-[#217346] relative">
          <div className="absolute left-[776px] top-[1px] w-[100px] h-[65px] bg-[#1c5f3b]" />
          <TitleLeaves />
          <TitleBar />
          <TabBar />
        </div>
        <Ribbon />
        <div className="h-px bg-[#d0d0d0]" />
        <FormulaBar />
        <div className="h-[11px]" />
        <Sheet />
        <SheetTabs />
        <StatusBar />
      </div>
      <Tray />
    </div>
  );
}
